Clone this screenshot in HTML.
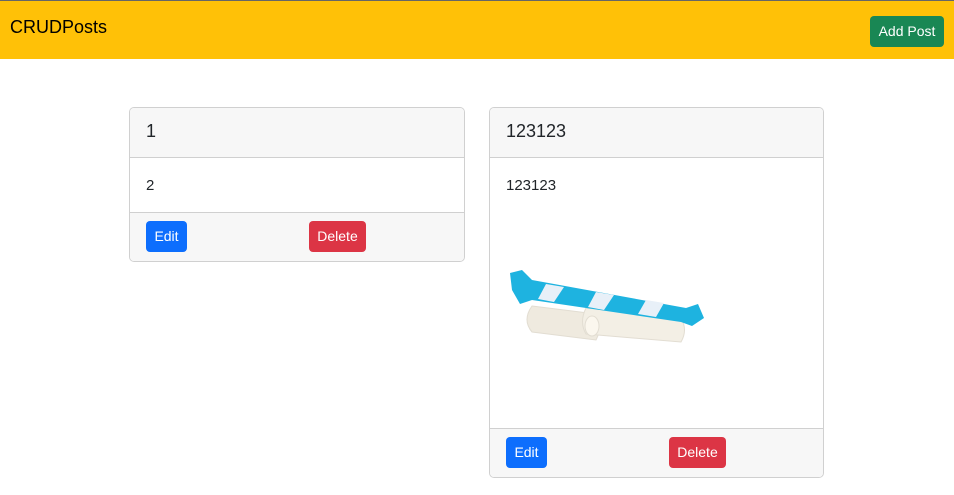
<!DOCTYPE html>
<html><head><style>
*{box-sizing:border-box;margin:0;padding:0}
body{width:954px;height:495px;background:#fff;font-family:"Liberation Sans",sans-serif;color:#212529;position:relative;overflow:hidden}
.nav{position:absolute;left:0;top:0;width:954px;height:59px;background:#ffc107;border-top:1px solid #666}
.brand{position:absolute;left:10px;top:16px;font-size:18px;color:#000}
.add{position:absolute;left:870px;top:15px;width:74px;height:31px;background:#198754;color:#fff;border-radius:4px;font-size:14px;text-align:center;line-height:31px}
.card{position:absolute;border:1px solid #d0d0d0;border-radius:5px;overflow:hidden;background:#fff}
.hd{height:50px;background:#f7f7f7;border-bottom:1px solid #d0d0d0;font-size:18px;padding:13px 16px}
.bd{font-size:15px;padding:19px 16px;height:56px}
.ft{position:absolute;left:0;right:0;bottom:0;height:49px;background:#f7f7f7;border-top:1px solid #d0d0d0}
.btn{position:absolute;top:8px;height:31px;color:#fff;border-radius:4px;font-size:14px;line-height:31px;text-align:center}
.e{left:16px;width:41px;background:#0d6efd}
.d{left:179px;width:57px;background:#dc3545}
</style></head><body>
<div class="nav"><div class="brand">CRUDPosts</div><div class="add">Add Post</div></div>
<div class="card" style="left:129px;top:107px;width:336px;height:155px">
<div class="hd">1</div><div class="bd">2</div>
<div class="ft"><div class="btn e">Edit</div><div class="btn d">Delete</div></div></div>
<div class="card" style="left:489px;top:107px;width:335px;height:371px">
<div class="hd">123123</div><div class="bd">123123</div>
<svg style="position:absolute;left:16px;top:160px" width="200" height="80" viewBox="0 0 200 80">
<path d="M26 38 L90 46 Q98 56 90 72 L26 64 Q16 52 26 38Z" fill="#efeadf" stroke="#e2ddd2"/>
<path d="M80 40 L175 50 Q182 62 175 74 L80 66 Q73 54 80 40Z" fill="#f3efe5" stroke="#e2ddd2"/>
<ellipse cx="86" cy="58" rx="7" ry="10" fill="#fbf7ee" stroke="#e2ddd2"/>
<path d="M4 5 L16 2 L26 12 L180 40 L192 36 L198 50 L186 58 L175 54 L26 32 L14 36 L6 22Z" fill="#1eb3e0"/>
<path d="M40 16 L58 19 L48 34 L32 31Z M90 24 L108 27 L98 42 L82 39Z M140 32 L158 35 L150 49 L132 46Z" fill="#e8f0f8"/>
</svg>
<div class="ft"><div class="btn e">Edit</div><div class="btn d">Delete</div></div></div>
</body></html>
